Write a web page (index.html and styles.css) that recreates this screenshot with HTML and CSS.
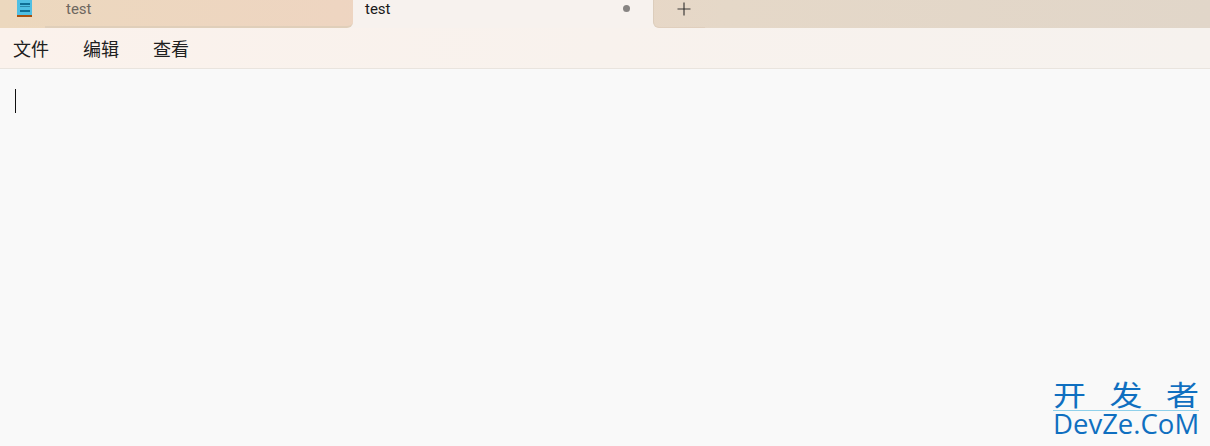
FILE: index.html
```html
<!DOCTYPE html>
<html lang="zh-CN">
  <head>
    <meta charset="UTF-8" />
    <title>test - Notepad</title>
    <link rel="stylesheet" href="styles.css">
  </head>
  <body>
    <div class="window">
      <div class="tabbar">
        <div class="app-icon">
          <svg width="18" height="18" viewBox="0 0 18 18">
            <rect x="1" y="0" width="15" height="15" fill="#4fbfe3" />
            <rect x="4" y="3" width="10" height="2" fill="#0f6f96" />
            <rect x="4" y="6" width="10" height="1" fill="#2a88aa" />
            <rect x="4" y="10" width="10" height="2" fill="#0f6f96" />
            <rect x="1" y="15" width="15" height="2" fill="#a8500f" />
          </svg>
        </div>
        <div class="tab">test</div>
        <div class="tab tab-active">
          <span>test</span>
          <span class="dot"></span>
        </div>
        <div class="tab-new">
          <svg width="14" height="14" viewBox="0 0 14 14">
            <path d="M0.5 7H13.5" stroke="#6b6660" stroke-width="1.4" />
            <path d="M7 0.5V13.5" stroke="#1c1c1c" stroke-width="1" />
          </svg>
        </div>
        <div class="tab-rest"></div>
      </div>
      <div class="menubar">
        <span class="menu-item">文件</span>
        <span class="menu-item">编辑</span>
        <span class="menu-item">查看</span>
      </div>
      <div class="editor">
        <div class="caret"></div>
        <div class="watermark">
          <div class="wm-cn"><span>开</span><span>发</span><span>者</span></div>
          <div class="wm-en">DevZe.CoM</div>
        </div>
      </div>
    </div>
  </body>
</html>
```

FILE: styles.css
```css
html, body {
  margin: 0;
  padding: 0;
}
body {
  font-family: "Noto Sans CJK SC", "Noto Sans", sans-serif;
  background-color: #f9f9f9;
  color: #1a1a1a;
}
.window {
  width: 1210px;
  height: 446px;
  display: flex;
  flex-direction: column;
  overflow: hidden;
}
.tabbar {
  height: 28px;
  display: flex;
  background-color: #f7f2ee;
}
/* every piece of the strip shares one gradient, corners show the light bar behind */
.app-icon,
.tab,
.tab-new,
.tab-rest {
  background-image: linear-gradient(90deg, #ecd8be 0%, #eed5c1 28%, #e5d8c8 60%, #e1d6c9 100%);
  background-size: 1210px 28px;
  background-attachment: fixed;
  background-repeat: no-repeat;
}
.app-icon {
  width: 45px;
  padding-left: 16px;
  box-sizing: border-box;
  flex-shrink: 0;
}
.app-icon svg {
  display: block;
}
.tab {
  width: 308px;
  height: 28px;
  box-sizing: border-box;
  padding: 0 0 0 21px;
  display: flex;
  align-items: flex-start;
  justify-content: space-between;
  font-family: Roboto, sans-serif;
  font-size: 15px;
  line-height: 18px;
  color: #6e675f;
  border-bottom: 2px solid #e0cfba;
  border-radius: 0 0 6px 0;
}
.tab-active {
  width: 299px;
  margin-left: 1px;
  padding: 0 23px 0 11px;
  color: #1a1a1a;
  background-image: none;
  background-color: #f7f2ee;
  border-bottom: none;
  border-radius: 0;
}
.dot {
  width: 7px;
  height: 7px;
  margin-top: 5px;
  border-radius: 50%;
  background-color: #878482;
}
.tab-new {
  width: 52px;
  height: 28px;
  box-sizing: border-box;
  padding: 2px 0 0 23px;
  border-left: 1px solid #dccdbc;
  border-bottom: 1px solid #e0cfbd;
  border-radius: 0 0 0 6px;
}
.tab-new svg {
  display: block;
}
.tab-rest {
  flex: 1;
}
.menubar {
  height: 40px;
  display: flex;
  align-items: center;
  gap: 34px;
  padding-left: 13px;
  box-sizing: border-box;
  background: linear-gradient(90deg, #fbf2ec 0%, #f8f2ed 50%, #f6f2ee 100%);
}
.menu-item {
  font-size: 18px;
  color: #202020;
}
.editor {
  flex: 1;
  position: relative;
  background-color: #f9f9f9;
  border-top: 1px solid #e9e4de;
}
.caret {
  width: 1px;
  height: 24px;
  margin: 20px 0 0 15px;
  background-color: #111;
}
.watermark {
  position: absolute;
  right: 11px;
  bottom: 10px;
  width: 146px;
  color: #0f6fc0;
}
.wm-cn {
  display: flex;
  justify-content: space-between;
  font-size: 33px;
  line-height: 32px;
  border-bottom: 1px solid #8fd0ea;
}
.wm-cn span {
  transform: scaleY(0.85);
}
.wm-en {
  font-family: "Open Sans", sans-serif;
  font-size: 27.5px;
  line-height: 24px;
  margin-top: 1px;
  white-space: nowrap;
}
```
